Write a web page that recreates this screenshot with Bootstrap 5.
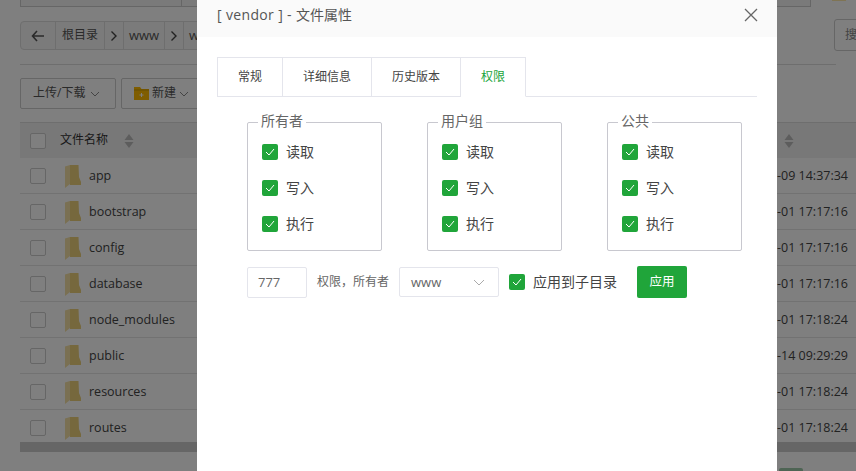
<!DOCTYPE html>
<html lang="zh-CN">
<head>
<meta charset="utf-8">
<title>文件属性</title>
<link href="https://cdn.jsdelivr.net/npm/bootstrap@5.3.0/dist/css/bootstrap.min.css" rel="stylesheet">
<style>
html,body{height:100%;overflow:hidden}
body{background:#fff;color:#444;font:12px/1.4 "Open Sans","Noto Sans CJK SC",sans-serif;width:856px;height:471px;position:relative}
.pg{width:856px;height:471px;overflow:hidden;padding-left:20px}
.topbox{height:8px;width:836px;margin-top:-1px;display:flex}
.topbox i{display:block;height:8px;border:1px solid #ccc;border-top:0;background:#f5f5f5}
.topa{width:161px;border-right:0!important}
.topb{width:630px}
.topc{width:14px;height:2px!important;background:#ffe9a8!important;border:0!important;margin-left:21px}
.crumbrow{margin-top:14px;height:29px;display:flex;width:960px}
.crumb{display:flex;height:29px;border:1px solid #ddd;border-radius:4px;background:#f6f6f6;width:700px;overflow:hidden;font-size:13px;flex:none}
.crumb span{border-right:1px solid #ddd;display:flex;align-items:center;justify-content:center;color:#555;flex:none}
.crumb .zh{font-size:12px}
.srch{border:1px solid #ccc;border-radius:3px;width:100px;height:32px;margin:-2px 0 0 114px;display:flex;align-items:center;padding-left:10px;font-size:12px;color:#888;background:#fff;flex:none}
.rule1{width:816px;border-top:1px solid #ddd;margin-top:14px}
.tools{display:flex;gap:5px;margin-top:13px;height:31px}
.tool{border:1px solid #ccc;border-radius:2px;height:31px;display:flex;align-items:center;font-size:12px;color:#555;gap:5px;background:#fff;flex:none}
.tool.tight{gap:3px}
.tabl{margin-top:13px;width:836px;height:330px;position:relative;overflow:hidden;border-top:1px solid #ddd}
.thead{height:35px;background:#f0f0f0;display:flex;align-items:center}
.trow{height:36px;border-bottom:1px solid #e4e4e4;display:flex;align-items:center}
.cb0{width:16px;height:16px;border:1px solid #ccc;border-radius:2px;background:#fff;margin-left:10px;flex:none}
.fold{margin-left:19px;flex:none}
.nm{margin-left:8px;font-size:12.500px;color:#444;width:587px}
.dt{width:172px;text-align:right;font-size:12.500px;color:#444;flex:none}
.thn{margin-left:14px;font-size:12px;color:#333;width:56px}
.sbar{position:absolute;left:0;right:0;top:319px;height:10px;background:#ccc}
.grn{position:absolute;left:779px;top:468px;width:24px;height:6px;background:#9cc9a8;border-radius:2px}
.shade{position:absolute;inset:0;background:rgba(0,0,0,.5)}
.dlg{position:absolute;left:197px;top:0;width:580px;height:471px;background:#fff}
.dlghead{height:37px;background:#fafafa;padding:0 19px 8px 20px;display:flex;align-items:center;justify-content:space-between;font-size:14px;color:#555}
.ttl{letter-spacing:.35px}
.ttl b{font-weight:400;letter-spacing:0}
.dlgbody{padding:20px 20px 0}
.tabbar{display:flex;height:40px;border-bottom:1px solid #e4e5ec}
.tb{height:40px;border:1px solid #e4e5ec;border-left:0;display:flex;align-items:center;justify-content:center;color:#444;font-size:12px;flex:none}
.tb:first-child{border-left:1px solid #e4e5ec}
.tb.on{color:#20a53a;border-bottom-color:#fff}
.perms{display:flex;gap:45px;margin:25px 0 0 30px}
.pbox{width:135px;height:129px;border:1px solid #c8c8cf;border-radius:2px;padding:11px 14px 0;position:relative}
.plg{position:absolute;left:10px;top:-12px;background:#fff;padding:0 3px;font-size:14px;line-height:20px;color:#666}
.pln{height:36px;display:flex;align-items:center;gap:8px;font-size:14px;color:#444}
.cb1{width:16px;height:16px;background:#20a53a;border-radius:2px;flex:none;display:flex;align-items:center;justify-content:center}
.lastrow{display:flex;align-items:center;margin:15px 0 0 30px;height:32px}
.fld{border:1px solid #e4e5ec;border-radius:2px;height:31px;font-size:13px;color:#666;display:flex;align-items:center;padding-left:10px;flex:none}
.f1{width:60px}
.f2{width:100px;padding-left:11px;justify-content:space-between;padding-right:13px;height:30px}
.oth{margin:0 10px;font-size:12px;color:#666}
.cbl{display:flex;align-items:center;gap:8px;font-size:14px;color:#444;margin-left:10px;width:128px}
.apply{background:#20a53a;color:#fff;font-size:12.500px;width:50px;height:32px;border-radius:2px;display:flex;align-items:center;justify-content:center}
</style>
</head>
<body>
<div class="pg">
  <div class="topbox"><i class="topa"></i><i class="topb"></i><i class="topc"></i></div>
  <div class="crumbrow">
    <div class="crumb">
      <span style="width:35px"><svg width="14" height="12" viewBox="0 0 14 12"><path d="M6 1 1.500 6 6 11M2 6h11" fill="none" stroke="#555" stroke-width="1.600"/></svg></span>
      <span class="zh" style="width:49px">根目录</span>
      <span style="width:19px"><svg width="8" height="12" viewBox="0 0 8 12"><path d="M1.500 1.500 6 6l-4.500 4.500" fill="none" stroke="#444" stroke-width="1.400"/></svg></span>
      <span style="width:41px">www</span>
      <span style="width:19px"><svg width="8" height="12" viewBox="0 0 8 12"><path d="M1.500 1.500 6 6l-4.500 4.500" fill="none" stroke="#444" stroke-width="1.400"/></svg></span>
      <span style="width:41px">www</span>
    </div>
    <div class="srch">搜索</div>
  </div>
  <div class="rule1"></div>
  <div class="tools">
    <div class="tool" style="width:96px;padding-left:12px">上传/下载 <svg width="10" height="6" viewBox="0 0 10 6"><path d="M1 1l4 4 4-4" fill="none" stroke="#888"/></svg></div>
    <div class="tool tight" style="width:100px;padding-left:12px"><svg width="15" height="13" viewBox="0 0 15 13"><path d="M0 0h6l1.500 2H15v11H0z" fill="#fb0"/><path d="M0 3h15" stroke="#c90"/><path d="M5.500 8h4M7.500 6v4" stroke="#fff"/></svg>新建 <svg width="10" height="6" viewBox="0 0 10 6"><path d="M1 1l4 4 4-4" fill="none" stroke="#888"/></svg></div>
  </div>
  <div class="tabl">
    <div class="thead"><div class="cb0"></div><div class="thn">文件名称</div>
      <svg width="10" height="14" viewBox="0 0 10 14" class="ms-2"><path d="M5 0l4.500 6H.5zM5 14 .5 8h9z" fill="#bbb"/></svg>
      <div style="width:650px"></div>
      <svg width="10" height="14" viewBox="0 0 10 14"><path d="M5 0l4.500 6H.5zM5 14 .5 8h9z" fill="#bbb"/></svg>
    </div>
    <div class="trow"><div class="cb0"></div><svg class="fold" width="16" height="24" viewBox="0 0 16 24"><path d="M5 1h8.500l.5 12 2 5v3H5z" fill="#ecd07a"/><path d="M0 2.500 5 1v19l-5 4z" fill="#f4e0a6"/></svg><div class="nm">app</div><div class="dt">2023-06-09 14:37:34</div></div>
    <div class="trow"><div class="cb0"></div><svg class="fold" width="16" height="24" viewBox="0 0 16 24"><path d="M5 1h8.500l.5 12 2 5v3H5z" fill="#ecd07a"/><path d="M0 2.500 5 1v19l-5 4z" fill="#f4e0a6"/></svg><div class="nm">bootstrap</div><div class="dt">2023-06-01 17:17:16</div></div>
    <div class="trow"><div class="cb0"></div><svg class="fold" width="16" height="24" viewBox="0 0 16 24"><path d="M5 1h8.500l.5 12 2 5v3H5z" fill="#ecd07a"/><path d="M0 2.500 5 1v19l-5 4z" fill="#f4e0a6"/></svg><div class="nm">config</div><div class="dt">2023-06-01 17:17:16</div></div>
    <div class="trow"><div class="cb0"></div><svg class="fold" width="16" height="24" viewBox="0 0 16 24"><path d="M5 1h8.500l.5 12 2 5v3H5z" fill="#ecd07a"/><path d="M0 2.500 5 1v19l-5 4z" fill="#f4e0a6"/></svg><div class="nm">database</div><div class="dt">2023-06-01 17:17:16</div></div>
    <div class="trow"><div class="cb0"></div><svg class="fold" width="16" height="24" viewBox="0 0 16 24"><path d="M5 1h8.500l.5 12 2 5v3H5z" fill="#ecd07a"/><path d="M0 2.500 5 1v19l-5 4z" fill="#f4e0a6"/></svg><div class="nm">node_modules</div><div class="dt">2023-06-01 17:18:24</div></div>
    <div class="trow"><div class="cb0"></div><svg class="fold" width="16" height="24" viewBox="0 0 16 24"><path d="M5 1h8.500l.5 12 2 5v3H5z" fill="#ecd07a"/><path d="M0 2.500 5 1v19l-5 4z" fill="#f4e0a6"/></svg><div class="nm">public</div><div class="dt">2023-06-14 09:29:29</div></div>
    <div class="trow"><div class="cb0"></div><svg class="fold" width="16" height="24" viewBox="0 0 16 24"><path d="M5 1h8.500l.5 12 2 5v3H5z" fill="#ecd07a"/><path d="M0 2.500 5 1v19l-5 4z" fill="#f4e0a6"/></svg><div class="nm">resources</div><div class="dt">2023-06-01 17:18:24</div></div>
    <div class="trow"><div class="cb0"></div><svg class="fold" width="16" height="24" viewBox="0 0 16 24"><path d="M5 1h8.500l.5 12 2 5v3H5z" fill="#ecd07a"/><path d="M0 2.500 5 1v19l-5 4z" fill="#f4e0a6"/></svg><div class="nm">routes</div><div class="dt">2023-06-01 17:18:24</div></div>
    <div class="sbar"></div>
  </div>
</div>
<div class="grn"></div>
<div class="shade"></div>
<div class="dlg">
  <div class="dlghead"><span class="ttl">[ vendor ] - <b>文件属性</b></span>
    <svg width="14" height="14" viewBox="0 0 14 14"><path d="M1 1l12 12M13 1 1 13" stroke="#666" stroke-width="1.300"/></svg></div>
  <div class="dlgbody">
    <div class="tabbar">
      <div class="tb" style="width:66px">常规</div>
      <div class="tb" style="width:89px">详细信息</div>
      <div class="tb" style="width:89px">历史版本</div>
      <div class="tb on" style="width:65px">权限</div>
    </div>
    <div class="perms">
      <div class="pbox"><div class="plg">所有者</div>
        <div class="pln"><span class="cb1"><svg width="10" height="8" viewBox="0 0 10 8"><path d="M1 4l3 3 5-6" fill="none" stroke="#fff"/></svg></span>读取</div>
        <div class="pln"><span class="cb1"><svg width="10" height="8" viewBox="0 0 10 8"><path d="M1 4l3 3 5-6" fill="none" stroke="#fff"/></svg></span>写入</div>
        <div class="pln"><span class="cb1"><svg width="10" height="8" viewBox="0 0 10 8"><path d="M1 4l3 3 5-6" fill="none" stroke="#fff"/></svg></span>执行</div>
      </div>
      <div class="pbox"><div class="plg">用户组</div>
        <div class="pln"><span class="cb1"><svg width="10" height="8" viewBox="0 0 10 8"><path d="M1 4l3 3 5-6" fill="none" stroke="#fff"/></svg></span>读取</div>
        <div class="pln"><span class="cb1"><svg width="10" height="8" viewBox="0 0 10 8"><path d="M1 4l3 3 5-6" fill="none" stroke="#fff"/></svg></span>写入</div>
        <div class="pln"><span class="cb1"><svg width="10" height="8" viewBox="0 0 10 8"><path d="M1 4l3 3 5-6" fill="none" stroke="#fff"/></svg></span>执行</div>
      </div>
      <div class="pbox"><div class="plg">公共</div>
        <div class="pln"><span class="cb1"><svg width="10" height="8" viewBox="0 0 10 8"><path d="M1 4l3 3 5-6" fill="none" stroke="#fff"/></svg></span>读取</div>
        <div class="pln"><span class="cb1"><svg width="10" height="8" viewBox="0 0 10 8"><path d="M1 4l3 3 5-6" fill="none" stroke="#fff"/></svg></span>写入</div>
        <div class="pln"><span class="cb1"><svg width="10" height="8" viewBox="0 0 10 8"><path d="M1 4l3 3 5-6" fill="none" stroke="#fff"/></svg></span>执行</div>
      </div>
    </div>
    <div class="lastrow">
      <div class="fld f1">777</div>
      <div class="oth">权限，所有者</div>
      <div class="fld f2">www<svg width="12" height="7" viewBox="0 0 12 7"><path d="M1 1l5 5 5-5" fill="none" stroke="#aaa"/></svg></div>
      <div class="cbl"><span class="cb1"><svg width="10" height="8" viewBox="0 0 10 8"><path d="M1 4l3 3 5-6" fill="none" stroke="#fff"/></svg></span>应用到子目录</div>
      <div class="apply">应用</div>
    </div>
  </div>
</div>
</body>
</html>
